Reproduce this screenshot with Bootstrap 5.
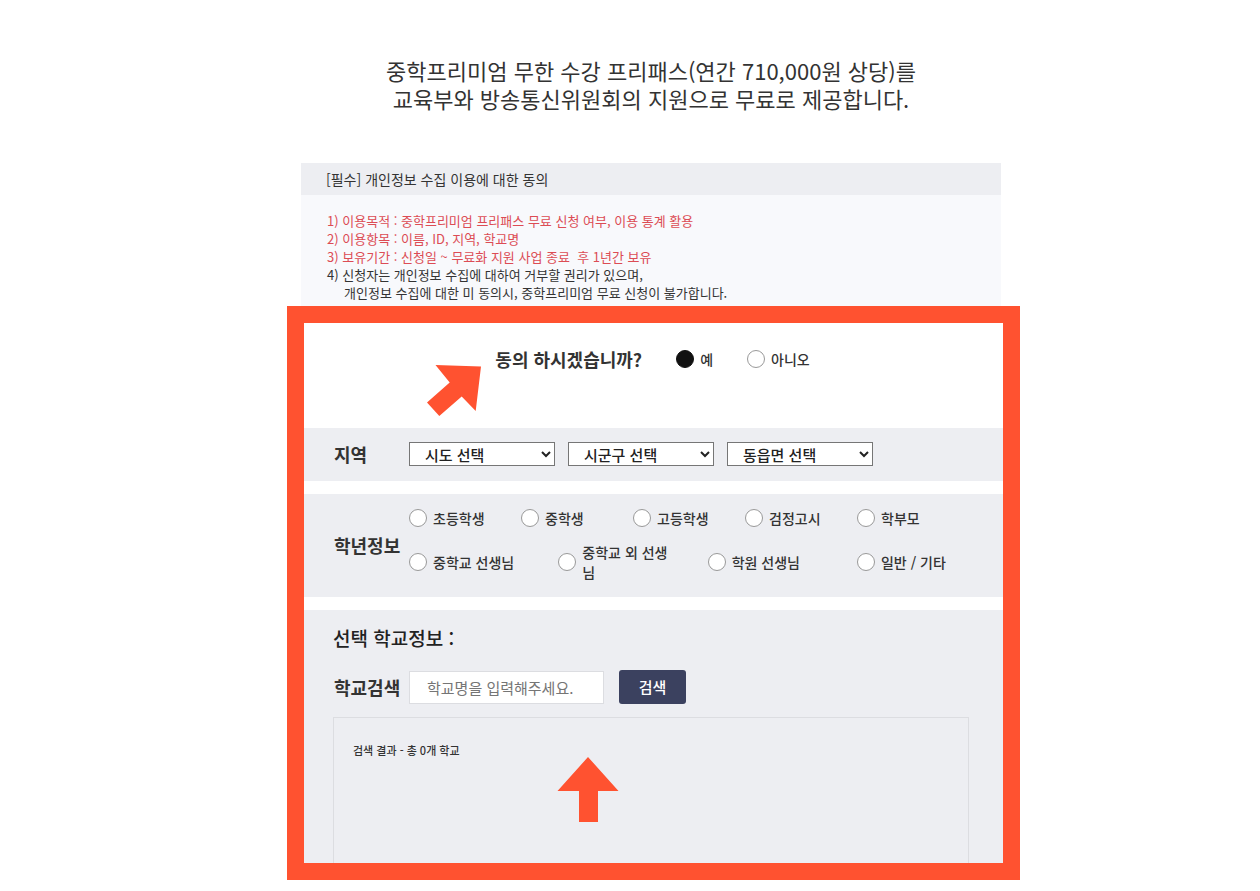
<!DOCTYPE html>
<html lang="ko">
<head>
<meta charset="utf-8">
<meta name="viewport" content="width=device-width, initial-scale=1">
<title>중학프리미엄 무료 신청</title>
<link href="https://cdn.jsdelivr.net/npm/bootstrap@5.3.0/dist/css/bootstrap.min.css" rel="stylesheet">
<style>
body { font-family: "Noto Sans CJK KR", sans-serif; color: #333; background: #fff; }
.page-wrap { padding: 56px 0 11px 47px; }
.page-inner { max-width: 733px; }
.intro-title { font-size: 22px; line-height: 28px; font-weight: 400; padding-right: 5px; margin-bottom: 51px; }
.consent { margin: 0 19px 0 14px; background: #f8f9fc; font-size: 13px; line-height: 18px; }
.consent-head { background: #edeef2; font-size: 14px; line-height: 32px; padding: 0 25px; font-weight: 400; }
.consent-body { padding: 17px 25px 4px 26px; }
.consent-red { color: #dc4c54; }
.consent-indent { padding-left: 17px; }
.apply-frame { border: 17px solid #ff5230; }
.agree-row { height: 105px; padding-top: 22px; padding-right: 2px; }
.label-lg { font-size: 18px; line-height: 28px; font-weight: 700; }
.agree-gap { gap: 34px; }
.band { background: #edeef2; padding-left: 29px; padding-right: 34px; margin-bottom: 13px; }
.band-label { flex: 0 0 76px; padding-left: 1px; white-space: nowrap; }
.region-band { padding-top: 12px; padding-bottom: 13px; }
.select-gap { gap: 13px; }
.region-select { width: 146px; height: 24px; padding: 0 0 0 11px; font-size: 15px; font-weight: 500; color: #222; background-color: #fff; border: 1px solid #767676; border-radius: 0; }
.grade-band { padding-top: 14px; padding-bottom: 15px; }
.opt { display: flex; align-items: center; gap: 6px; font-size: 14px; line-height: 20px; font-weight: 500; }
.opt .form-check-input { width: 18px; height: 18px; margin: 0; flex: none; border: 1px solid #999; background-color: #fff; }
.opt .form-check-input:checked { background-color: #111; border-color: #111; background-image: none; }
.grade-list { row-gap: 14px; }
.grade-list .opt { width: 112px; }
.school-band { margin-bottom: 0; padding-top: 14px; }
.school-title { font-size: 19px; line-height: 28px; font-weight: 500; margin-bottom: 18px; color: #222; }
.search-input { width: 195px; height: 33px; font-size: 15px; padding: 0 17px; border: 1px solid #dcdde1; border-radius: 0; background: #fff; }
.search-input::placeholder { color: #757575; opacity: 1; }
.search-btn { width: 67px; height: 34px; margin-left: 15px; padding: 0; font-size: 15px; font-weight: 500; color: #fff; background: #3b415f; border-radius: 3px; }
.search-btn:hover { color: #fff; background: #2e3450; }
.result-box { border: 1px solid #dcdde1; border-bottom: 0; height: 146px; margin-top: 13px; padding: 22px 19px; font-size: 11px; line-height: 20px; font-weight: 500; }
.arrow-agree { left: 123px; top: 42px; }
.arrow-search { left: 223px; top: 39px; }
</style>
</head>
<body>
<main class="page-wrap">
  <div class="page-inner mx-auto">
    <h1 class="intro-title text-center">중학프리미엄 무한 수강 프리패스(연간 710,000원 상당)를<br>교육부와 방송통신위원회의 지원으로 무료로 제공합니다.</h1>

    <section class="consent">
      <h2 class="consent-head mb-0">[필수] 개인정보 수집 이용에 대한 동의</h2>
      <div class="consent-body">
        <div class="consent-red">1) 이용목적 : 중학프리미엄 프리패스 무료 신청 여부, 이용 통계 활용</div>
        <div class="consent-red">2) 이용항목 : 이름, ID, 지역, 학교명</div>
        <div class="consent-red">3) 보유기간 : 신청일 ~ 무료화 지원 사업 종료 &nbsp;후 1년간 보유</div>
        <div>4) 신청자는 개인정보 수집에 대하여 거부할 권리가 있으며,</div>
        <div class="consent-indent">개인정보 수집에 대한 미 동의시, 중학프리미엄 무료 신청이 불가합니다.</div>
      </div>
    </section>

    <form class="apply-frame">
      <div class="agree-row position-relative d-flex justify-content-center align-items-start agree-gap" role="radiogroup" aria-labelledby="agreeQ">
        <span class="label-lg" id="agreeQ">동의 하시겠습니까?</span>
        <div class="d-flex agree-gap pt-1">
          <div class="opt"><input class="form-check-input" type="radio" name="agree" id="agreeYes" checked><label for="agreeYes">예</label></div>
          <div class="opt"><input class="form-check-input" type="radio" name="agree" id="agreeNo"><label for="agreeNo">아니오</label></div>
        </div>
        <svg class="arrow-agree position-absolute" width="54" height="51" viewBox="0 0 54 51" aria-hidden="true"><path fill="#ff5230" d="M8.5 0 54 1.5 48.7 46 34.7 31.5 12.3 51 0 37.5 22.7 17.5Z"/></svg>
      </div>

      <div class="band region-band d-flex align-items-center">
        <div class="band-label label-lg">지역</div>
        <div class="d-flex select-gap">
          <select class="region-select" aria-label="시도"><option>시도 선택</option></select>
          <select class="region-select" aria-label="시군구"><option>시군구 선택</option></select>
          <select class="region-select" aria-label="동읍면"><option>동읍면 선택</option></select>
        </div>
      </div>

      <div class="band grade-band d-flex align-items-center" role="radiogroup" aria-labelledby="gradeQ">
        <div class="band-label label-lg" id="gradeQ">학년정보</div>
        <div class="grade-list d-flex flex-column flex-grow-1">
          <div class="d-flex justify-content-between">
            <div class="opt"><input class="form-check-input" type="radio" name="grade" id="g1"><label for="g1">초등학생</label></div>
            <div class="opt"><input class="form-check-input" type="radio" name="grade" id="g2"><label for="g2">중학생</label></div>
            <div class="opt"><input class="form-check-input" type="radio" name="grade" id="g3"><label for="g3">고등학생</label></div>
            <div class="opt"><input class="form-check-input" type="radio" name="grade" id="g4"><label for="g4">검정고시</label></div>
            <div class="opt"><input class="form-check-input" type="radio" name="grade" id="g5"><label for="g5">학부모</label></div>
          </div>
          <div class="d-flex justify-content-between">
            <div class="opt"><input class="form-check-input" type="radio" name="grade" id="g6"><label for="g6">중학교 선생님</label></div>
            <div class="opt"><input class="form-check-input" type="radio" name="grade" id="g7"><label for="g7">중학교 외 선생님</label></div>
            <div class="opt"><input class="form-check-input" type="radio" name="grade" id="g8"><label for="g8">학원 선생님</label></div>
            <div class="opt"><input class="form-check-input" type="radio" name="grade" id="g9"><label for="g9">일반 / 기타</label></div>
          </div>
        </div>
      </div>

      <div class="band school-band">
        <h3 class="school-title">선택 학교정보 :</h3>
        <div class="d-flex align-items-center">
          <label class="band-label label-lg" for="schoolName">학교검색</label>
          <input class="search-input" type="text" id="schoolName" placeholder="학교명을 입력해주세요.">
          <button class="btn search-btn" type="button">검색</button>
        </div>
        <div class="result-box position-relative">
          검색 결과 - 총 0개 학교
          <svg class="arrow-search position-absolute" width="62" height="65" viewBox="0 0 62 65" aria-hidden="true"><path fill="#ff5230" d="M31 0 61.5 34H41V65H22V34H.5Z"/></svg>
        </div>
      </div>
    </form>
  </div>
</main>
<script src="https://cdn.jsdelivr.net/npm/bootstrap@5.3.0/dist/js/bootstrap.bundle.min.js"></script>
</body>
</html>
